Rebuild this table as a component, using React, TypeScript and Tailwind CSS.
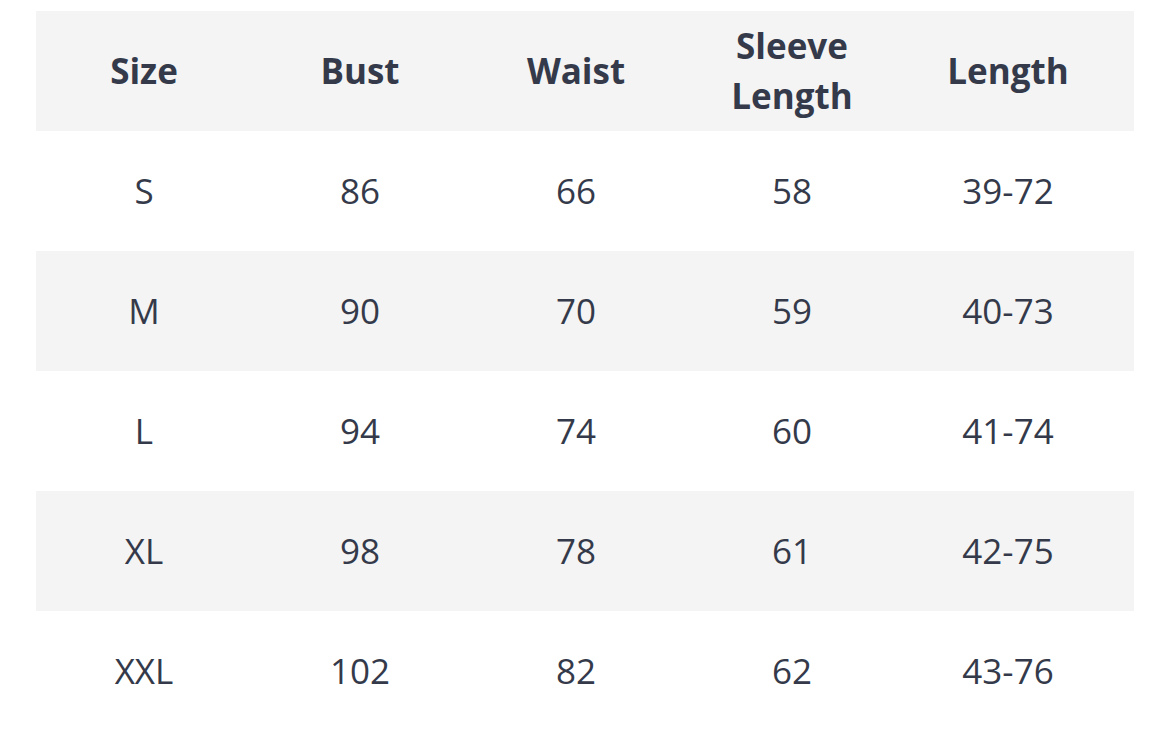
const headers = ['Size', 'Bust', 'Waist', 'Sleeve Length', 'Length'];

const rows = [
  ['S', '86', '66', '58', '39-72'],
  ['M', '90', '70', '59', '40-73'],
  ['L', '94', '74', '60', '41-74'],
  ['XL', '98', '78', '61', '42-75'],
  ['XXL', '102', '82', '62', '43-76'],
];

export default function App() {
  return (
    <div className="w-[1170px] h-[748px] bg-white pt-[11px] pl-[36px] text-[#343a4a] font-['Open_Sans',sans-serif] text-[35px] leading-[50px]">
      <div className="w-[1098px]">
        <div className="grid grid-cols-[repeat(5,216px)] h-[120px] bg-[#f4f4f4] font-bold">
          {headers.map((h) => (
            <div key={h} className="flex items-center justify-center text-center px-4">
              {h === 'Sleeve Length' ? (
                <span>
                  Sleeve
                  <br />
                  Length
                </span>
              ) : (
                h
              )}
            </div>
          ))}
        </div>
        {rows.map((row, i) => (
          <div
            key={row[0]}
            className={`grid grid-cols-[repeat(5,216px)] h-[120px] ${i % 2 === 1 ? 'bg-[#f4f4f4]' : 'bg-white'}`}
          >
            {row.map((cell, j) => (
              <div key={j} className="flex items-center justify-center">
                {cell}
              </div>
            ))}
          </div>
        ))}
      </div>
    </div>
  );
}
